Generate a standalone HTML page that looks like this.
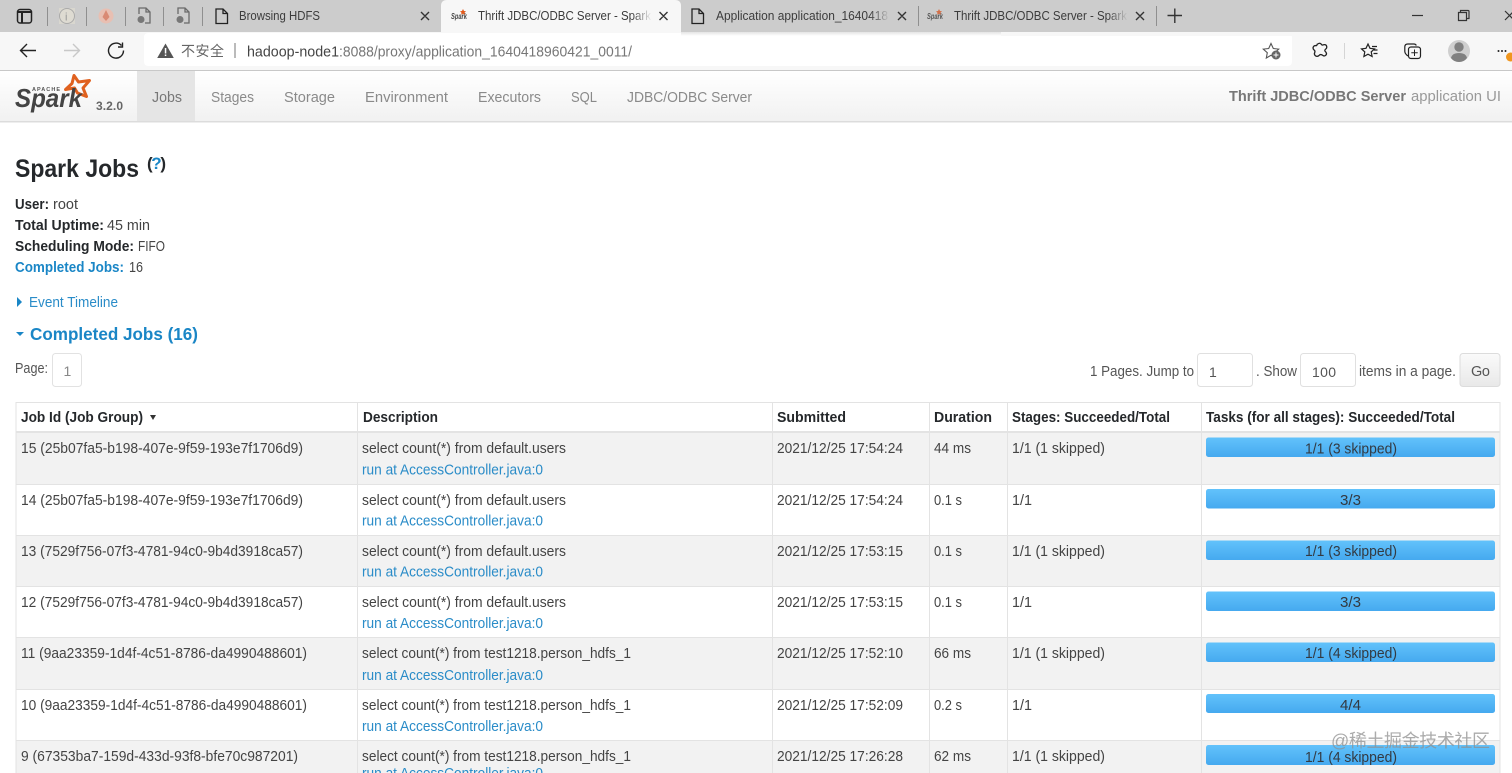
<!DOCTYPE html>
<html lang="zh"><head><meta charset="utf-8"><title>Spark Jobs</title>
<style>
html,body{margin:0;padding:0;background:#fff;overflow:hidden;width:1512px;height:773px}
svg{display:block;position:absolute;left:0;top:0;filter:blur(.3px)}
text{font-family:"Liberation Sans","Noto Sans CJK SC",sans-serif;font-size:14.5px;fill:#444}
.b{font-weight:700;fill:#25282b}
.l{fill:#2a8cc8}
.n{font-size:15px;fill:#8a8a8a}
.t{font-size:12.5px;fill:#3c3c3c}
.c{fill:#333a42}
.i{fill:none;stroke:#333;stroke-width:1.4}
.s{stroke:#e3e3e3;stroke-width:1}
</style></head><body>
<svg width="1512" height="773" viewBox="0 0 1512 773" xmlns="http://www.w3.org/2000/svg">
<defs>
<linearGradient id="nav" x1="0" y1="0" x2="0" y2="1"><stop offset="0" stop-color="#fff"/><stop offset="1" stop-color="#f1f1f1"/></linearGradient>
<linearGradient id="bar" x1="0" y1="0" x2="0" y2="1"><stop offset="0" stop-color="#62c2fb"/><stop offset="1" stop-color="#45a9ef"/></linearGradient>
<linearGradient id="btn" x1="0" y1="0" x2="0" y2="1"><stop offset="0" stop-color="#fafafa"/><stop offset="1" stop-color="#e8e8e8"/></linearGradient>
<linearGradient id="fl" x1="0" y1="0" x2="1" y2="0"><stop offset="0" stop-color="#f7f7f7" stop-opacity="0"/><stop offset="1" stop-color="#f7f7f7"/></linearGradient>
<linearGradient id="fg" x1="0" y1="0" x2="1" y2="0"><stop offset="0" stop-color="#ccc" stop-opacity="0"/><stop offset="1" stop-color="#ccc"/></linearGradient>
<linearGradient id="sh" x1="0" y1="0" x2="0" y2="1"><stop offset="0" stop-color="#e4e4e4"/><stop offset="1" stop-color="#fff"/></linearGradient>
</defs>

<!-- tab strip -->
<rect width="1512" height="32" fill="#cccccc"/>
<rect x="0" y="32" width="1512" height="38" fill="#f7f7f7"/>
<path d="M441 32V6q0-6 6-6H675q6 0 6 6V32z" fill="#f7f7f7"/>
<rect x="144" y="33" width="1148" height="33" rx="4" fill="#fff"/>
<rect x="681" y="32" width="320" height="4" fill="url(#sh)"/>
<rect x="1001" y="32" width="291" height="4" fill="#f7f7f7"/>
<rect y="70" width="1512" height="1" fill="#c8c8c8"/>
<rect x="17.500" y="9.500" width="14" height="13.500" rx="2.500" fill="none" stroke="#222" stroke-width="1.500"/>
<path d="M17 12h15M22 11v12" stroke="#222" stroke-width="2" fill="none"/>
<g stroke="#8f8f8f"><path d="M47.500 7v19M86.500 7v19M125.500 7v19M163.500 7v19M202.500 7v19M918.500 6v20M1156.500 6v20"/></g>
<rect x="59" y="8" width="16" height="16" fill="#d9d7cf"/>
<circle cx="67" cy="16" r="7.500" fill="#dedbd2" stroke="#aaa"/><text x="65" y="20.500" style="font-size:11px;fill:#999">i</text>
<circle cx="106" cy="16" r="7.500" fill="#e8bfb2"/><path d="M106 10l3.500 7-3.500 4-3.500-4z" fill="#d98a74"/>
<g fill="none" stroke="#6a6a6a" stroke-width="1.300"><path d="M139 14v-6h7l4 4v11h-5M146 8v4h4"/><path d="M178 14v-6h7l4 4v11h-5M185 8v4h4"/></g>
<circle cx="141" cy="19.500" r="3.500" fill="#777"/><circle cx="180" cy="19.500" r="3.500" fill="#777"/>
<g fill="none" stroke="#222" stroke-width="1.300"><path d="M216 9h7l4.500 4.500V23.500H216zM223 9v4.500h4.500"/><path d="M692 9h7l4.500 4.500V23.500H692zM699 9v4.500h4.500"/></g>
<text class="t" x="239" y="20" textLength="81" lengthAdjust="spacingAndGlyphs">Browsing HDFS</text>
<g class="i"><path d="M421 12l8 8M429 12l-8 8M659.500 12l8 8M667.500 12l-8 8M898 12l8 8M906 12l-8 8M1136 12l8 8M1144 12l-8 8"/></g>
<text x="451" y="19" style="font-size:8px;font-style:italic;font-weight:700;fill:#444" textLength="16" lengthAdjust="spacingAndGlyphs">Spark</text>
<path d="M463 9l1 2 2 .3-1.500 1.500.4 2-1.900-1-1.900 1 .4-2-1.500-1.500 2-.3z" fill="#e25a1c"/>
<text x="927" y="19" style="font-size:8px;font-style:italic;font-weight:700;fill:#555" textLength="16" lengthAdjust="spacingAndGlyphs">Spark</text>
<path d="M939 9l1 2 2 .3-1.500 1.500.4 2-1.900-1-1.900 1 .4-2-1.500-1.500 2-.3z" fill="#d2704a"/>
<text class="t" x="478" y="20" textLength="173" lengthAdjust="spacingAndGlyphs">Thrift JDBC/ODBC Server - Spark</text>
<rect x="632" y="6" width="20" height="20" fill="url(#fl)"/>
<text class="t" x="716" y="20" textLength="172" lengthAdjust="spacingAndGlyphs">Application application_1640418</text>
<rect x="870" y="6" width="20" height="20" fill="url(#fg)"/>
<text class="t" x="954" y="20" textLength="173" lengthAdjust="spacingAndGlyphs">Thrift JDBC/ODBC Server - Spark</text>
<rect x="1108" y="6" width="20" height="20" fill="url(#fg)"/>
<path d="M1167.500 15.500h14.500M1174.800 8.500v14.500" stroke="#333" stroke-width="1.400" fill="none"/>
<path d="M1412 15.500h11" stroke="#333" stroke-width="1.200"/>
<path d="M1458.500 12.500h8v8h-8zM1460.500 12.500v-2h7.500q1 0 1 1v7h-2" fill="none" stroke="#333" stroke-width="1.200"/>
<path d="M1505 11l9 9M1514 11l-9 9" stroke="#333" stroke-width="1.200"/>

<!-- toolbar -->
<path d="M36 50.500H20.500M27 44l-6.500 6.500L27 57" fill="none" stroke="#222" stroke-width="1.400"/>
<path d="M64 50.500H79.500M73 44l6.500 6.500L73 57" fill="none" stroke="#c8c8c8" stroke-width="1.400"/>
<path d="M121.500 45.500a7.500 7.500 0 1 0 2 5M122.500 42.500v4.500H118" fill="none" stroke="#222" stroke-width="1.400"/>
<path d="M165.500 43.500l8.300 14.500h-16.600z" fill="#555"/><rect x="164.800" y="48" width="1.500" height="5.500" fill="#fff"/><rect x="164.800" y="54.500" width="1.500" height="1.500" fill="#fff"/>
<text x="181" y="56" style="font-size:14px;fill:#666" textLength="43">不安全</text>
<rect x="234.500" y="43" width="1" height="15" fill="#777"/>
<text x="247" y="56.500" style="font-size:15px;fill:#444" textLength="92" lengthAdjust="spacingAndGlyphs">hadoop-node1</text>
<text x="339" y="56.500" style="font-size:15px;fill:#777" textLength="293" lengthAdjust="spacingAndGlyphs">:8088/proxy/application_1640418960421_0011/</text>
<path d="M1271 43.500l2.300 5 5.400.6-4 3.600 1 5.300-4.700-2.700-4.700 2.700 1-5.300-4-3.600 5.400-.6z" fill="none" stroke="#555" stroke-width="1.100"/>
<circle cx="1276" cy="55" r="4.500" fill="#666"/><path d="M1273.500 55h5M1276 52.500v5" stroke="#fff"/>
<path d="M1317 44.500q3-2.500 4.500 0 .5 1 2 .3 3-.8 3.300 2.200 0 1.300-1 2-2 1.500 0 3 1.500 2-.3 3.500-1.600 1-3-.3-2-1.500-3.500.3-1.500 1.500-3.500.3-1.700-1.300-.7-3.500.5-1.500-.7-2.300-2-1.800-.3-3.800 1-1 2.500-.5.8-.3 1-1.700z" fill="none" stroke="#222" stroke-width="1.300"/>
<rect x="1344" y="43" width="1" height="16" fill="#d5d5d5"/>
<path d="M1368 44l2 4.300 4.500.6-3.300 3 .9 4.600-4.100-2.300-4.100 2.300.9-4.600-3.300-3 4.500-.6zM1372 46.500h5M1374 50h3.500M1373.500 53.500h4" fill="none" stroke="#222" stroke-width="1.200"/>
<path d="M1408 56q-3-2-3.200-4.500V47q0-3 3-3h6q2 0 2.500 1.500" fill="none" stroke="#222" stroke-width="1.200"/>
<rect x="1408.500" y="47" width="12" height="11.500" rx="2.500" fill="none" stroke="#222" stroke-width="1.200"/><path d="M1414.500 49.500v6.500M1411.300 52.800h6.400" stroke="#222"/>
<circle cx="1459" cy="51" r="11" fill="#cfcfcf"/><circle cx="1459" cy="47" r="4.700" fill="#808080"/><path d="M1451 58q1-5 8-5t8 5q-3 4-8 4t-8-4z" fill="#808080"/>
<g fill="#222"><circle cx="1498.500" cy="51" r="1"/><circle cx="1502" cy="51" r="1"/><circle cx="1505.500" cy="51" r="1"/></g>
<circle cx="1510.500" cy="57" r="4.500" fill="#f0961f"/>

<!-- nav -->
<rect y="71" width="1512" height="50" fill="url(#nav)"/>
<rect y="121" width="1512" height="1.500" fill="#dcdcdc"/>
<rect x="137" y="71" width="58" height="50" fill="#e5e5e5"/>
<path d="M74 75.500l4.500 6.500 11-1.500-6.500 7.500 3.500 8.500-9-3.500-3-5-9 1.500 6.500-6z" fill="none" stroke="#e0611f" stroke-width="3" stroke-linejoin="round"/>
<text x="32" y="91" style="font-size:5.500px;font-weight:700;fill:#555" textLength="28">APACHE</text>
<text x="15" y="107" style="font-size:26px;font-weight:700;font-style:italic;fill:#444" textLength="67" lengthAdjust="spacingAndGlyphs">Spark</text>
<text x="96" y="110" style="font-size:12px;font-weight:700;fill:#666" textLength="27">3.2.0</text>
<text class="n" x="152" y="102" style="fill:#777" textLength="30" lengthAdjust="spacingAndGlyphs">Jobs</text>
<text class="n" x="211" y="102" textLength="43" lengthAdjust="spacingAndGlyphs">Stages</text>
<text class="n" x="284" y="102" textLength="51" lengthAdjust="spacingAndGlyphs">Storage</text>
<text class="n" x="365" y="102" textLength="83" lengthAdjust="spacingAndGlyphs">Environment</text>
<text class="n" x="478" y="102" textLength="63" lengthAdjust="spacingAndGlyphs">Executors</text>
<text class="n" x="571" y="102" textLength="26" lengthAdjust="spacingAndGlyphs">SQL</text>
<text class="n" x="627" y="102" textLength="125" lengthAdjust="spacingAndGlyphs">JDBC/ODBC Server</text>
<text x="1229" y="101" style="font-size:14.500px;font-weight:700;fill:#777" textLength="177" lengthAdjust="spacingAndGlyphs">Thrift JDBC/ODBC Server</text>
<text x="1411" y="101" style="font-size:14.500px;fill:#999" textLength="90" lengthAdjust="spacingAndGlyphs">application UI</text>

<!-- summary -->
<text x="15" y="177" style="font-size:25px;font-weight:700;fill:#25282b" textLength="124" lengthAdjust="spacingAndGlyphs">Spark Jobs</text>
<text x="147" y="169" style="font-size:17px;font-weight:700;fill:#25282b" textLength="19">(<tspan style="fill:#1a86c6">?</tspan>)</text>
<text class="b" x="15" y="209" textLength="34" lengthAdjust="spacingAndGlyphs">User:</text><text x="53" y="209" textLength="25" lengthAdjust="spacingAndGlyphs">root</text>
<text class="b" x="15" y="230" textLength="89" lengthAdjust="spacingAndGlyphs">Total Uptime:</text><text x="107" y="230" textLength="43" lengthAdjust="spacingAndGlyphs">45 min</text>
<text class="b" x="15" y="251" textLength="119" lengthAdjust="spacingAndGlyphs">Scheduling Mode:</text><text x="138" y="251" textLength="27" lengthAdjust="spacingAndGlyphs">FIFO</text>
<text class="b" x="15" y="272" style="fill:#1a86c6" textLength="109" lengthAdjust="spacingAndGlyphs">Completed Jobs:</text><text x="129" y="272" textLength="14" lengthAdjust="spacingAndGlyphs">16</text>
<path d="M17 297l5 5-5 5z" fill="#1a86c6"/>
<text class="l" x="29" y="307" textLength="89" lengthAdjust="spacingAndGlyphs">Event Timeline</text>
<path d="M16 332h8l-4 4z" fill="#1a86c6"/>
<text x="30" y="340" style="font-size:17.500px;font-weight:700;fill:#1a86c6" textLength="168" lengthAdjust="spacingAndGlyphs">Completed Jobs (16)</text>

<!-- pagination -->
<text x="15" y="373" style="fill:#555" textLength="33" lengthAdjust="spacingAndGlyphs">Page:</text>
<rect x="52.500" y="353.500" width="29" height="33" rx="3" fill="#fff" stroke="#e2e2e2"/>
<text x="63.500" y="376" style="fill:#888;font-size:14px">1</text>
<text x="1090" y="376" style="fill:#555" textLength="104" lengthAdjust="spacingAndGlyphs">1 Pages. Jump to</text>
<rect x="1197.500" y="353.500" width="55" height="33" rx="3" fill="#fff" stroke="#e0e0e0"/>
<text x="1209" y="377" style="fill:#555;font-size:14px">1</text>
<text x="1256" y="376" style="fill:#555" textLength="41" lengthAdjust="spacingAndGlyphs">. Show</text>
<rect x="1300.500" y="353.500" width="55" height="33" rx="3" fill="#fff" stroke="#e0e0e0"/>
<text x="1312" y="377" style="fill:#555;font-size:14px" textLength="24">100</text>
<text x="1359" y="376" style="fill:#555" textLength="97" lengthAdjust="spacingAndGlyphs">items in a page.</text>
<rect x="1460" y="353.500" width="40" height="33" rx="3" fill="url(#btn)" stroke="#dcdcdc"/>
<text x="1471" y="376" style="fill:#555" textLength="19">Go</text>

<!-- table bands -->
<rect x="16" y="433" width="1484" height="51" fill="#f2f2f2"/>
<rect x="16" y="536" width="1484" height="50" fill="#f2f2f2"/>
<rect x="16" y="638" width="1484" height="51" fill="#f2f2f2"/>
<rect x="16" y="741" width="1484" height="32" fill="#f2f2f2"/>
<g class="s">
<path d="M16 402.500H1500M16 484.500H1500M16 535.500H1500M16 586.500H1500M16 637.500H1500M16 689.500H1500M16 740.500H1500"/>
<path d="M16 432H1500" stroke-width="2"/>
<path d="M16 402V773M357.500 402V773M772.500 402V773M929.500 402V773M1007.500 402V773M1201.500 402V773M1500 402V773"/>
</g>

<!-- header -->
<text class="b" x="21" y="422" textLength="122" lengthAdjust="spacingAndGlyphs">Job Id (Job Group)</text>
<path d="M150 415h6l-3 5z" fill="#333"/>
<text class="b" x="363" y="422" textLength="75" lengthAdjust="spacingAndGlyphs">Description</text>
<text class="b" x="777" y="422" textLength="69" lengthAdjust="spacingAndGlyphs">Submitted</text>
<text class="b" x="934" y="422" textLength="58" lengthAdjust="spacingAndGlyphs">Duration</text>
<text class="b" x="1012" y="422" textLength="158" lengthAdjust="spacingAndGlyphs">Stages: Succeeded/Total</text>
<text class="b" x="1206" y="422" textLength="249" lengthAdjust="spacingAndGlyphs">Tasks (for all stages): Succeeded/Total</text>

<!-- row 15 -->
<text x="21" y="453" textLength="282" lengthAdjust="spacingAndGlyphs">15 (25b07fa5-b198-407e-9f59-193e7f1706d9)</text>
<text x="362" y="453" textLength="204" lengthAdjust="spacingAndGlyphs">select count(*) from default.users</text>
<text class="l" x="362" y="474.500" textLength="181" lengthAdjust="spacingAndGlyphs">run at AccessController.java:0</text>
<text x="777" y="453" textLength="126" lengthAdjust="spacingAndGlyphs">2021/12/25 17:54:24</text>
<text x="934" y="453" textLength="37" lengthAdjust="spacingAndGlyphs">44 ms</text>
<text x="1012" y="453" textLength="93" lengthAdjust="spacingAndGlyphs">1/1 (1 skipped)</text>
<rect x="1206" y="437.500" width="289" height="19.500" rx="2.500" fill="url(#bar)"/>
<text class="c" x="1305" y="453.500" textLength="92" lengthAdjust="spacingAndGlyphs">1/1 (3 skipped)</text>

<!-- row 14 -->
<text x="21" y="505" textLength="282" lengthAdjust="spacingAndGlyphs">14 (25b07fa5-b198-407e-9f59-193e7f1706d9)</text>
<text x="362" y="505" textLength="204" lengthAdjust="spacingAndGlyphs">select count(*) from default.users</text>
<text class="l" x="362" y="525.500" textLength="181" lengthAdjust="spacingAndGlyphs">run at AccessController.java:0</text>
<text x="777" y="505" textLength="126" lengthAdjust="spacingAndGlyphs">2021/12/25 17:54:24</text>
<text x="934" y="505" textLength="28" lengthAdjust="spacingAndGlyphs">0.1 s</text>
<text x="1012" y="505" textLength="20" lengthAdjust="spacingAndGlyphs">1/1</text>
<rect x="1206" y="489" width="289" height="19.500" rx="2.500" fill="url(#bar)"/>
<text class="c" x="1340" y="505" textLength="21" lengthAdjust="spacingAndGlyphs">3/3</text>

<!-- row 13 -->
<text x="21" y="556" textLength="282" lengthAdjust="spacingAndGlyphs">13 (7529f756-07f3-4781-94c0-9b4d3918ca57)</text>
<text x="362" y="556" textLength="204" lengthAdjust="spacingAndGlyphs">select count(*) from default.users</text>
<text class="l" x="362" y="576.500" textLength="181" lengthAdjust="spacingAndGlyphs">run at AccessController.java:0</text>
<text x="777" y="556" textLength="126" lengthAdjust="spacingAndGlyphs">2021/12/25 17:53:15</text>
<text x="934" y="556" textLength="28" lengthAdjust="spacingAndGlyphs">0.1 s</text>
<text x="1012" y="556" textLength="93" lengthAdjust="spacingAndGlyphs">1/1 (1 skipped)</text>
<rect x="1206" y="540.500" width="289" height="19.500" rx="2.500" fill="url(#bar)"/>
<text class="c" x="1305" y="556" textLength="92" lengthAdjust="spacingAndGlyphs">1/1 (3 skipped)</text>

<!-- row 12 -->
<text x="21" y="607" textLength="282" lengthAdjust="spacingAndGlyphs">12 (7529f756-07f3-4781-94c0-9b4d3918ca57)</text>
<text x="362" y="607" textLength="204" lengthAdjust="spacingAndGlyphs">select count(*) from default.users</text>
<text class="l" x="362" y="628" textLength="181" lengthAdjust="spacingAndGlyphs">run at AccessController.java:0</text>
<text x="777" y="607" textLength="126" lengthAdjust="spacingAndGlyphs">2021/12/25 17:53:15</text>
<text x="934" y="607" textLength="28" lengthAdjust="spacingAndGlyphs">0.1 s</text>
<text x="1012" y="607" textLength="20" lengthAdjust="spacingAndGlyphs">1/1</text>
<rect x="1206" y="591.500" width="289" height="19.500" rx="2.500" fill="url(#bar)"/>
<text class="c" x="1340" y="607" textLength="21" lengthAdjust="spacingAndGlyphs">3/3</text>

<!-- row 11 -->
<text x="21" y="658" textLength="286" lengthAdjust="spacingAndGlyphs">11 (9aa23359-1d4f-4c51-8786-da4990488601)</text>
<text x="362" y="658" textLength="269" lengthAdjust="spacingAndGlyphs">select count(*) from test1218.person_hdfs_1</text>
<text class="l" x="362" y="680" textLength="181" lengthAdjust="spacingAndGlyphs">run at AccessController.java:0</text>
<text x="777" y="658" textLength="126" lengthAdjust="spacingAndGlyphs">2021/12/25 17:52:10</text>
<text x="934" y="658" textLength="37" lengthAdjust="spacingAndGlyphs">66 ms</text>
<text x="1012" y="658" textLength="93" lengthAdjust="spacingAndGlyphs">1/1 (1 skipped)</text>
<rect x="1206" y="642.500" width="289" height="19.500" rx="2.500" fill="url(#bar)"/>
<text class="c" x="1305" y="658" textLength="92" lengthAdjust="spacingAndGlyphs">1/1 (4 skipped)</text>

<!-- row 10 -->
<text x="21" y="710" textLength="286" lengthAdjust="spacingAndGlyphs">10 (9aa23359-1d4f-4c51-8786-da4990488601)</text>
<text x="362" y="710" textLength="269" lengthAdjust="spacingAndGlyphs">select count(*) from test1218.person_hdfs_1</text>
<text class="l" x="362" y="731" textLength="181" lengthAdjust="spacingAndGlyphs">run at AccessController.java:0</text>
<text x="777" y="710" textLength="126" lengthAdjust="spacingAndGlyphs">2021/12/25 17:52:09</text>
<text x="934" y="710" textLength="28" lengthAdjust="spacingAndGlyphs">0.2 s</text>
<text x="1012" y="710" textLength="20" lengthAdjust="spacingAndGlyphs">1/1</text>
<rect x="1206" y="694" width="289" height="19" rx="2.500" fill="url(#bar)"/>
<text class="c" x="1340" y="710" textLength="21" lengthAdjust="spacingAndGlyphs">4/4</text>

<!-- row 9 -->
<text x="21" y="761" textLength="277" lengthAdjust="spacingAndGlyphs">9 (67353ba7-159d-433d-93f8-bfe70c987201)</text>
<text x="362" y="761" textLength="269" lengthAdjust="spacingAndGlyphs">select count(*) from test1218.person_hdfs_1</text>
<text class="l" x="362" y="778" textLength="181" lengthAdjust="spacingAndGlyphs">run at AccessController.java:0</text>
<text x="777" y="761" textLength="126" lengthAdjust="spacingAndGlyphs">2021/12/25 17:26:28</text>
<text x="934" y="761" textLength="37" lengthAdjust="spacingAndGlyphs">62 ms</text>
<text x="1012" y="761" textLength="93" lengthAdjust="spacingAndGlyphs">1/1 (1 skipped)</text>
<rect x="1206" y="745" width="289" height="20" rx="2.500" fill="url(#bar)"/>
<text class="c" x="1305" y="762" textLength="92" lengthAdjust="spacingAndGlyphs">1/1 (4 skipped)</text>

<!-- watermark -->
<text x="1331" y="747" style="font-size:18px;fill:#8f8f8f;fill-opacity:.75" textLength="159">@稀土掘金技术社区</text>
</svg>
</body></html>
